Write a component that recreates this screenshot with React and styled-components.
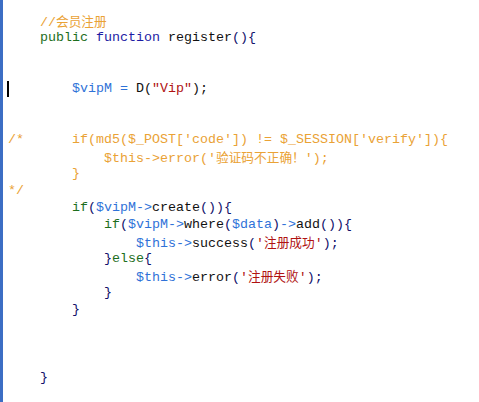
import React from "react";
import styled, { createGlobalStyle } from "styled-components";

const Global = createGlobalStyle`
  html, body { margin: 0; padding: 0; background: #ffffff; }
  body { width: 479px; height: 402px; overflow: hidden; }
`;

const Editor = styled.div`
  box-sizing: border-box;
  width: 479px;
  height: 402px;
  background: #ffffff;
  border-left: 3px solid #3c6ec4;
  padding: 12px 0 0 5px;
  font-family: "Liberation Mono", "Noto Sans CJK SC", monospace;
  font-size: 13.33px;
  display: flex;
  flex-direction: column;
`;

const Line = styled.div`
  position: relative;
  height: 17px;
  line-height: 17px;
  white-space: pre;
  padding-left: ${(p) => (p.indent || 0) * 8}px;
`;

const colors = {
  comment: "#eaa235",
  keyword: "#1d6e1d",
  fn: "#1c1ca4",
  plain: "#111111",
  punc: "#10106a",
  variable: "#2f72d8",
  string: "#b01212",
};

const Tok = styled.span`
  color: ${(p) => colors[p.kind] || colors.plain};
`;

const Cjk = styled.span`
  font-family: "Noto Sans CJK SC", sans-serif;
  font-size: 12.7px;
`;

const Caret = styled.span`
  position: absolute;
  left: -1px;
  top: 1px;
  width: 2px;
  height: 16px;
  background: #000000;
`;

const C = ({ children }) => <Cjk>{children}</Cjk>;

export default function App() {
  return (
    <>
      <Global />
      <Editor>
        <Line indent={4}>
          <Tok kind="comment">//<C>会员注册</C></Tok>
        </Line>
        <Line indent={4}>
          <Tok kind="keyword">public</Tok> <Tok kind="fn">function</Tok>{" "}
          <Tok kind="plain">register</Tok>
          <Tok kind="punc">(){"{"}</Tok>
        </Line>
        <Line />
        <Line />
        <Line indent={8}>
          <Caret />
          <Tok kind="variable">$vipM</Tok> <Tok kind="variable">=</Tok>{" "}
          <Tok kind="plain">D(</Tok>
          <Tok kind="string">"Vip"</Tok>
          <Tok kind="plain">);</Tok>
        </Line>
        <Line />
        <Line />
        <Line>
          <Tok kind="comment">
            {"/*      if(md5($_POST['code']) != $_SESSION['verify']){"}
          </Tok>
        </Line>
        <Line indent={12}>
          <Tok kind="comment">
            $this-&gt;error('<C>验证码不正确！</C>');
          </Tok>
        </Line>
        <Line indent={8}>
          <Tok kind="comment">{"}"}</Tok>
        </Line>
        <Line>
          <Tok kind="comment">*/</Tok>
        </Line>
        <Line indent={8}>
          <Tok kind="keyword">if</Tok>
          <Tok kind="punc">(</Tok>
          <Tok kind="variable">$vipM-&gt;</Tok>
          <Tok kind="plain">create</Tok>
          <Tok kind="punc">()){"{"}</Tok>
        </Line>
        <Line indent={12}>
          <Tok kind="keyword">if</Tok>
          <Tok kind="punc">(</Tok>
          <Tok kind="variable">$vipM-&gt;</Tok>
          <Tok kind="plain">where</Tok>
          <Tok kind="punc">(</Tok>
          <Tok kind="variable">$data</Tok>
          <Tok kind="punc">)</Tok>
          <Tok kind="variable">-&gt;</Tok>
          <Tok kind="plain">add</Tok>
          <Tok kind="punc">()){"{"}</Tok>
        </Line>
        <Line indent={16}>
          <Tok kind="variable">$this-&gt;</Tok>
          <Tok kind="plain">success</Tok>
          <Tok kind="punc">(</Tok>
          <Tok kind="string">
            '<C>注册成功</C>'
          </Tok>
          <Tok kind="punc">);</Tok>
        </Line>
        <Line indent={12}>
          <Tok kind="punc">{"}"}</Tok>
          <Tok kind="keyword">else</Tok>
          <Tok kind="punc">{"{"}</Tok>
        </Line>
        <Line indent={16}>
          <Tok kind="variable">$this-&gt;</Tok>
          <Tok kind="plain">error</Tok>
          <Tok kind="punc">(</Tok>
          <Tok kind="string">
            '<C>注册失败</C>'
          </Tok>
          <Tok kind="punc">);</Tok>
        </Line>
        <Line indent={12}>
          <Tok kind="punc">{"}"}</Tok>
        </Line>
        <Line indent={8}>
          <Tok kind="punc">{"}"}</Tok>
        </Line>
        <Line />
        <Line />
        <Line />
        <Line indent={4}>
          <Tok kind="punc">{"}"}</Tok>
        </Line>
      </Editor>
    </>
  );
}
